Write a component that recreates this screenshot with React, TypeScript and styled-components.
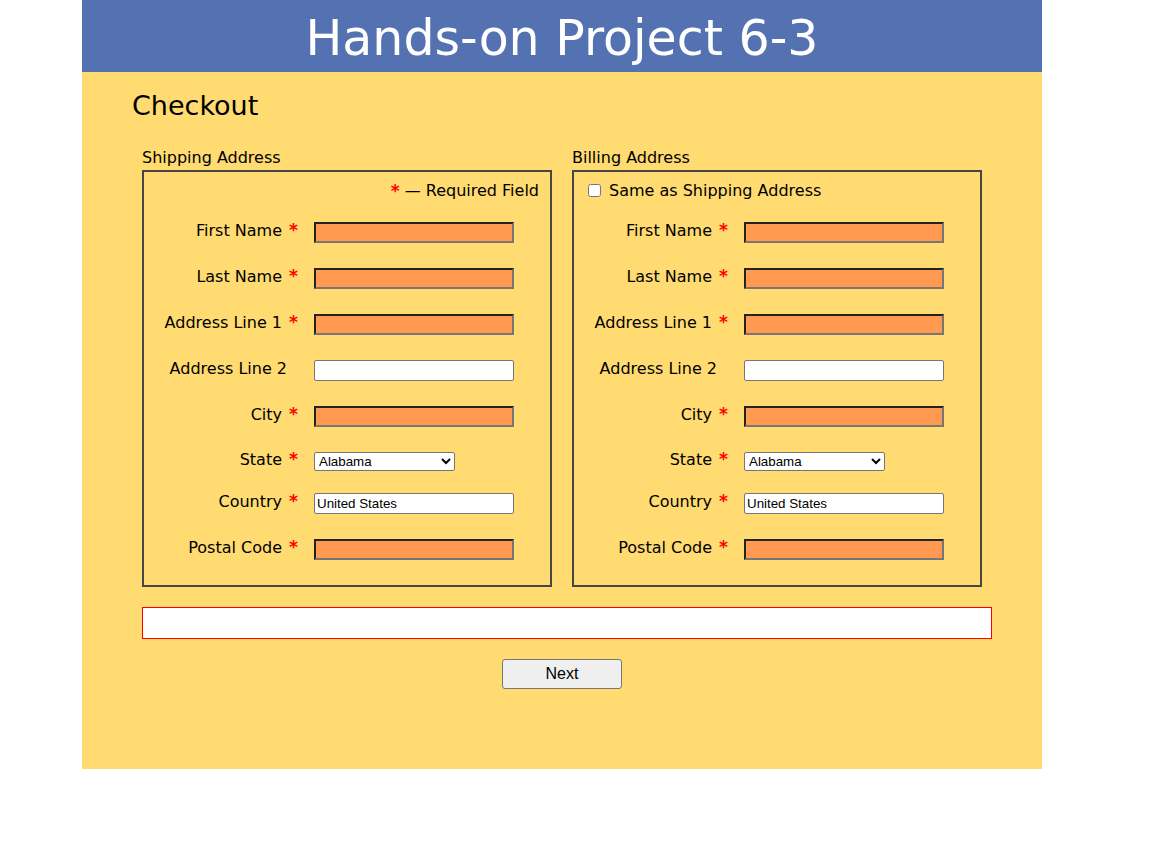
import React from "react";
import styled, { createGlobalStyle } from "styled-components";

const GlobalStyle = createGlobalStyle`
  html, body {
    margin: 0;
    padding: 0;
    background: #ffffff;
  }
  body {
    font-family: Verdana, "DejaVu Sans", sans-serif;
    color: #000;
  }
`;

const Page = styled.article`
  width: 960px;
  min-height: 769px;
  margin-left: 82px;
  background: #ffdb72;
  box-sizing: border-box;
  padding-bottom: 80px;
`;

const Header = styled.header`
  height: 72px;
  background: #5472b2;
  box-sizing: border-box;
  padding-top: 6px;
`;

const Title = styled.h1`
  margin: 0;
  font-family: Verdana, "DejaVu Sans", sans-serif;
  font-weight: normal;
  font-size: 49px;
  line-height: 66px;
  color: #ffffff;
  text-align: center;
`;

const Heading = styled.h2`
  margin: 18px 0 0 50px;
  font-weight: normal;
  font-size: 27px;
  line-height: 31px;
`;

const Form = styled.form`
  margin: 27px 0 0 60px;
  width: 850px;
`;

const Columns = styled.div`
  display: flex;
  gap: 20px;
`;

const Group = styled.section`
  width: 410px;
`;

const Legend = styled.div`
  font-size: 16px;
  line-height: 19px;
  margin-bottom: 3px;
`;

const Box = styled.div`
  border: 2px solid #464646;
  padding-bottom: 10px;
`;

const NoteRow = styled.div`
  height: 37px;
  display: flex;
  align-items: center;
  justify-content: flex-end;
  padding-right: 11px;
  font-size: 16px;
`;

const CheckRow = styled.label`
  height: 37px;
  display: flex;
  align-items: center;
  padding-left: 10px;
  font-size: 16px;
`;

const Check = styled.input`
  width: 13px;
  height: 13px;
  margin: 3px 8px 3px 4px;
`;

const Row = styled.div<{ $h: number }>`
  height: ${(p) => p.$h}px;
  display: grid;
  grid-template-columns: 154px 200px;
  column-gap: 16px;
  align-items: center;
`;

const Label = styled.label<{ $pad?: number }>`
  text-align: right;
  font-size: 16px;
  line-height: 19px;
  margin-bottom: 4px;
  padding-right: ${(p) => p.$pad ?? 0}px;
  white-space: nowrap;
`;

const Star = styled.span<{ $gap?: number }>`
  color: #ff0000;
  font-weight: bold;
  font-size: 17px;
  margin-left: ${(p) => p.$gap ?? 0}px;
`;

const TextInput = styled.input<{ $required?: boolean }>`
  box-sizing: border-box;
  width: 200px;
  height: 21px;
  margin: 0;
  padding: 1px 2px;
  font-family: "Liberation Sans", Arial, sans-serif;
  font-size: 13.333px;
  color: #000;
  background: ${(p) => (p.$required ? "#ff9a50" : "#ffffff")};
  border-style: solid;
  border-width: ${(p) => (p.$required ? "2px" : "1px")};
  border-color: ${(p) =>
    p.$required ? "#232323 #767676 #767676 #232323" : "#767676"};
  border-radius: ${(p) => (p.$required ? "0" : "2px")};
`;

const Select = styled.select`
  box-sizing: border-box;
  width: 141px;
  height: 19px;
  margin: 0;
  font-family: "Liberation Sans", Arial, sans-serif;
  font-size: 13.333px;
  color: #000;
  background: #fff;
  border: 1px solid #767676;
  border-radius: 2px;
`;

const ErrorBox = styled.div`
  margin-top: 20px;
  height: 32px;
  box-sizing: border-box;
  border: 1px solid #ff0000;
  background: #ffffff;
`;

const ButtonRow = styled.div`
  display: flex;
  justify-content: center;
  margin-top: 20px;
`;

const NextButton = styled.button`
  width: 120px;
  height: 30px;
  box-sizing: border-box;
  font-family: "Liberation Sans", Arial, sans-serif;
  font-size: 16px;
  color: #000;
  background: #efefef;
  border: 1px solid #767676;
  border-radius: 3px;
  padding: 0;
`;

type Field = {
  label: string;
  required: boolean;
  kind: "text" | "select";
  value?: string;
  h: number;
  pad?: number;
};

const fields: Field[] = [
  { label: "First Name", required: true, kind: "text", h: 46 },
  { label: "Last Name", required: true, kind: "text", h: 46 },
  { label: "Address Line 1", required: true, kind: "text", h: 46 },
  { label: "Address Line 2", required: false, kind: "text", h: 46, pad: 11 },
  { label: "City", required: true, kind: "text", h: 46 },
  { label: "State", required: true, kind: "select", h: 44 },
  { label: "Country", required: true, kind: "text", value: "United States", h: 40 },
  { label: "Postal Code", required: true, kind: "text", h: 52 },
];

function Fields({ prefix }: { prefix: string }) {
  return (
    <>
      {fields.map((f) => {
        const id = `${prefix}${f.label.replace(/\s/g, "")}`;
        return (
          <Row key={f.label} $h={f.h}>
            <Label htmlFor={id} $pad={f.pad}>
              {f.label}
              {f.required && (
                <>
                  {" "}
                  <Star $gap={2}>*</Star>
                </>
              )}
            </Label>
            {f.kind === "select" ? (
              <Select id={id} defaultValue="AL">
                <option value="AL">Alabama</option>
                <option value="AK">Alaska</option>
                <option value="AZ">Arizona</option>
              </Select>
            ) : (
              <TextInput
                id={id}
                type="text"
                $required={f.required && !f.value}
                defaultValue={f.value ?? ""}
              />
            )}
          </Row>
        );
      })}
    </>
  );
}

export default function App() {
  return (
    <>
      <GlobalStyle />
      <Page>
        <Header>
          <Title>Hands-on Project 6-3</Title>
        </Header>
        <Heading>Checkout</Heading>
        <Form onSubmit={(e) => e.preventDefault()}>
          <Columns>
            <Group>
              <Legend>Shipping Address</Legend>
              <Box>
                <NoteRow>
                  <Star>*</Star>&nbsp;— Required Field
                </NoteRow>
                <Fields prefix="ship" />
              </Box>
            </Group>
            <Group>
              <Legend>Billing Address</Legend>
              <Box>
                <CheckRow>
                  <Check type="checkbox" />
                  Same as Shipping Address
                </CheckRow>
                <Fields prefix="bill" />
              </Box>
            </Group>
          </Columns>
          <ErrorBox />
        </Form>
        <ButtonRow>
          <NextButton type="button">Next</NextButton>
        </ButtonRow>
      </Page>
    </>
  );
}
